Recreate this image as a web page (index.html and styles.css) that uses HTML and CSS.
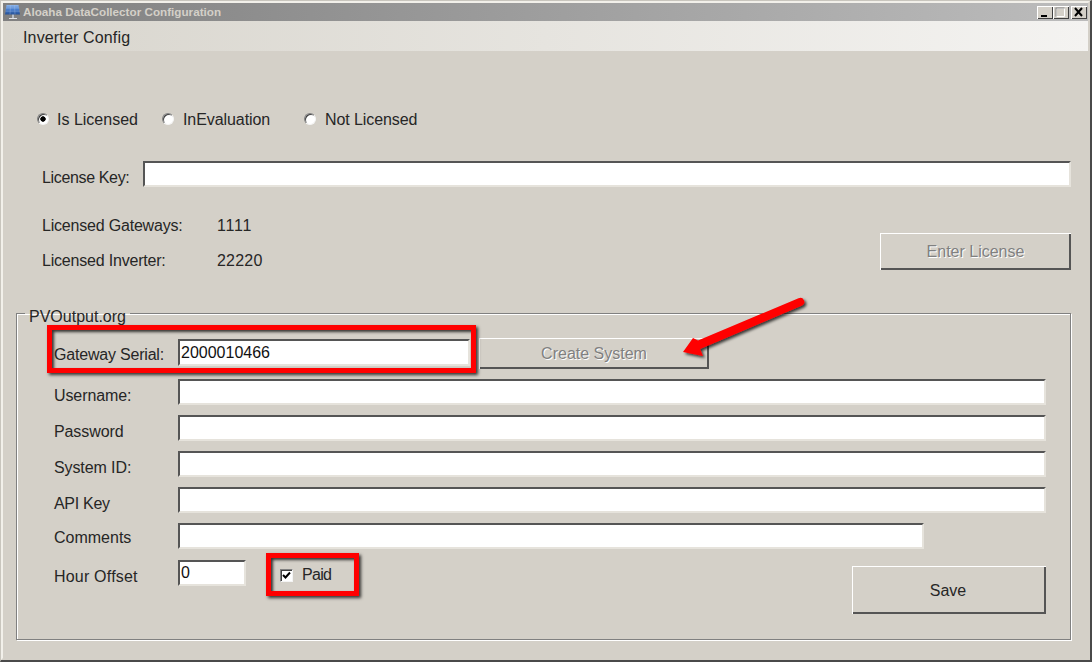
FILE: index.html
```html
<!DOCTYPE html>
<html lang="en">
<head>
<meta charset="utf-8">
<title>Aloaha DataCollector Configuration</title>
<link rel="stylesheet" href="styles.css">
</head>
<body>
<div class="window">
  <div class="frame">
    <div class="titlebar">
      <svg class="app-icon" width="16" height="16" viewBox="0 0 16 16">
        <defs>
          <linearGradient id="panel" x1="0" y1="0" x2="0" y2="1">
            <stop offset="0" stop-color="#8fb6ea"/>
            <stop offset=".45" stop-color="#4a80cf"/>
            <stop offset="1" stop-color="#245096"/>
          </linearGradient>
        </defs>
        <path d="M7 10h2v4H7z" fill="#b8bec6"/>
        <path d="M4 14h8v1H4z" fill="#e0e2e6"/>
        <path d="M1.500 1h12l1.500 9.500H0z" fill="url(#panel)"/>
        <path d="M5.500 1 5 10.500M9.500 1l.5 9.500M1 4h13.500M.5 7.200h14.500" stroke="#a9c4ea" stroke-opacity=".55" stroke-width=".6" fill="none"/>
      </svg>
      <span class="title-text">Aloaha DataCollector Configuration</span>
      <div class="caption-btns">
        <span class="cap-btn"><svg width="16" height="13" viewBox="0 0 16 13"><path d="M4 9h6v2H4z" fill="#000"/></svg></span>
        <span class="cap-btn"><svg width="16" height="13" viewBox="0 0 16 13"><path d="M3.500 2.500h8v8h-8z" fill="none" stroke="#fff" stroke-width="1"/><path d="M2.500 1.500h9v1h-9zM2.500 2.500h1v8h-1z" fill="#808080"/></svg></span>
        <span class="cap-btn cap-close"><svg width="16" height="13" viewBox="0 0 16 13"><path d="M4 2l7 8M11 2l-7 8" stroke="#000" stroke-width="2" fill="none"/></svg></span>
      </div>
    </div>
    <div class="menubar"><span class="menu-item">Inverter Config</span></div>

    <div class="content">
      <div class="radio-row">
        <label class="radio-item radio-first"><span class="radio radio-on"></span>Is Licensed</label>
        <label class="radio-item radio-second"><span class="radio radio-wide"></span>InEvaluation</label>
        <label class="radio-item radio-third"><span class="radio radio-wide"></span>Not Licensed</label>
      </div>

      <div class="license-row">
        <span class="license-label">License Key:</span>
        <input class="field field-grow" type="text" aria-label="License Key">
      </div>

      <div class="stats-row">
        <div class="stats">
          <div class="stat"><span class="stat-name">Licensed Gateways:</span><span class="stat-gateways">1111</span></div>
          <div class="stat"><span class="stat-name">Licensed Inverter:</span><span class="stat-inverter">22220</span></div>
        </div>
        <button class="btn btn-license" disabled>Enter License</button>
      </div>

      <fieldset class="group">
        <legend class="group-title">PVOutput.org</legend>
        <div class="row row-first">
          <span class="row-label label-gateway">Gateway Serial:</span>
          <input class="field field-serial" type="text" value="2000010466" aria-label="Gateway Serial">
          <button class="btn btn-create" disabled>Create System</button>
        </div>
        <div class="row">
          <span class="row-label">Username:</span>
          <input class="field field-grow" type="text" aria-label="Username">
        </div>
        <div class="row">
          <span class="row-label">Password</span>
          <input class="field field-grow" type="text" aria-label="Password">
        </div>
        <div class="row">
          <span class="row-label">System ID:</span>
          <input class="field field-grow" type="text" aria-label="System ID">
        </div>
        <div class="row">
          <span class="row-label label-api">API Key</span>
          <input class="field field-grow" type="text" aria-label="API Key">
        </div>
        <div class="row">
          <span class="row-label label-comments">Comments</span>
          <input class="field field-comments" type="text" aria-label="Comments">
        </div>
        <div class="row row-last">
          <span class="row-label label-hour">Hour Offset</span>
          <input class="field field-hour" type="text" value="0" aria-label="Hour Offset">
          <label class="check-item">
            <span class="check"><svg width="9" height="9" viewBox="0 0 9 9"><path d="M1 4l2.500 2.500L8 1.500" fill="none" stroke="#000" stroke-width="2"/></svg></span><span class="check-text">Paid</span>
          </label>
          <button class="btn btn-save">Save</button>
        </div>
      </fieldset>
    </div>
  </div>

  <div class="callout callout-serial"></div>
  <div class="callout callout-paid"></div>
  <svg class="arrow" width="140" height="72" viewBox="0 0 140 72">
    <defs>
      <filter id="arrow-shadow" x="-10%" y="-20%" width="125%" height="150%">
        <feDropShadow dx="2" dy="2" stdDeviation="1.500" flood-color="#000" flood-opacity=".75"/>
      </filter>
    </defs>
    <path d="M118.500 2.300A4 4 0 0 1 122 9.600L20 53L23 60L3 56L13 42L18 44.500Z" fill="#f00" filter="url(#arrow-shadow)"/>
  </svg>
</div>
</body>
</html>
```
FILE: styles.css
```css
* { box-sizing: border-box; }
html, body { margin: 0; height: 100%; overflow: hidden; }
body {
  font-family: "Liberation Sans", Arial, sans-serif;
  font-size: 16px;
  line-height: 20px;
  color: #262626;
  background: #d4d0c8;
}
.window {
  position: relative;
  width: 1092px;
  height: 662px;
  border-style: solid;
  border-width: 1px 2px 2px 1px;
  border-color: #c8c5bd #4a4a4a #4a4a4a #c8c5bd;
}
.frame {
  height: 100%;
  border-style: solid;
  border-width: 2px;
  border-color: #f2f0ea #d4d0c8 #d4d0c8 #f2f0ea;
  background: #d4d0c8;
}
.titlebar {
  display: flex;
  align-items: center;
  height: 18px;
  padding-left: 2px;
  background: linear-gradient(to right, #808080, #bcbcbc);
}
.app-icon { flex: none; }
.title-text {
  margin-left: 2px;
  font-size: 11.700px;
  font-weight: 700;
  line-height: 18px;
  color: #d4d0c8;
}
.caption-btns {
  display: flex;
  margin-left: auto;
  margin-right: 1px;
}
.cap-btn {
  display: block;
  width: 16px;
  height: 13px;
  background: #d4d0c8;
  box-shadow: inset 1px 1px 0 #fff, inset -1px -1px 0 #404040;
  line-height: 0;
}
.cap-close { margin-left: 2px; }
.menubar {
  height: 30px;
  padding-left: 20px;
  background: linear-gradient(to right, #d8d5cd, #f4f3f1);
}
.menu-item { display: block; line-height: 34px; letter-spacing: .15px; }
.content { padding: 58px 17px 0 13px; }

.radio-row { display: flex; height: 20px; padding-left: 21px; }
.radio-item { display: flex; align-items: center; padding-top: 2px; }
.radio-first { width: 125px; }
.radio-second { width: 142px; letter-spacing: -.08px; }
.radio-third { letter-spacing: -.08px; }
.radio {
  width: 12px;
  height: 12px;
  margin: 0 8px 2px 0;
  border-radius: 50%;
  border: 1px solid;
  border-color: #808080 #f4f4f4 #f4f4f4 #808080;
  background: #fff;
  box-shadow: inset 1px 1px 0 #404040;
}
.radio-wide { margin-right: 9px; }
.radio-on { background: radial-gradient(circle, #000 0 2.400px, #fff 3px); }

.license-row { display: flex; align-items: flex-start; height: 26px; margin-top: 32px; padding-left: 26px; }
.license-label { width: 101px; flex: none; padding-top: 7px; letter-spacing: -.35px; }

.field {
  display: block;
  height: 26px;
  padding: 0 1px;
  border: 2px solid;
  border-color: #555 #e6e3dc #e6e3dc #555;
  border-radius: 0;
  background: #fff;
  font: inherit;
  color: #111;
  outline: none;
}
.field-grow { flex: 1 1 auto; min-width: 0; }
.field-serial { width: 292px; height: 27px; margin-top: 1px; }
.field-comments { width: 746px; }
.field-hour { width: 68px; }

.stats-row { display: flex; justify-content: space-between; align-items: flex-start; margin-top: 29px; padding-left: 26px; }
.stats { display: flex; flex-direction: column; gap: 15px; }
.stat { display: flex; }
.stat-name { width: 175px; letter-spacing: -.2px; }
.stat-gateways { letter-spacing: .75px; }
.stat-inverter { letter-spacing: .2px; }

.btn {
  display: block;
  padding: 0;
  border: 0;
  border-radius: 0;
  background: #d4d0c8;
  font: inherit;
  color: #262626;
  box-shadow: inset 1px 1px 0 #fff, inset -2px -2px 0 #555;
}
.btn:disabled { color: #808080; text-shadow: 1px 1px 0 #fff; }
.btn-license { width: 191px; height: 37px; margin-top: 17px; }
.btn-create { width: 230px; height: 31px; margin-left: 9px; }
.btn-save { width: 194px; height: 48px; margin: 6px 0 0 auto; padding: 2px 2px 0 0; }

.group {
  min-width: 0;
  margin: 29px 0 0;
  padding: 12px 24px 25px 37px;
  border: 1px solid #808080;
  box-shadow: 1px 1px 0 #fff, inset 1px 1px 0 #fff;
}
.group-title { margin-left: -29px; padding: 8px 4px 0; line-height: 18px; }

.row { display: flex; align-items: flex-start; height: 26px; margin-bottom: 10px; }
.row-first { height: 31px; }
.row-last { height: auto; margin: 11px 0 0; }
.row-label { width: 124px; flex: none; padding-top: 7px; letter-spacing: -.1px; }
.label-gateway { padding-top: 7px; letter-spacing: -.2px; }
.label-comments { padding-top: 5px; letter-spacing: 0; }
.label-api { letter-spacing: -.3px; }
.label-hour { letter-spacing: .2px; }

.check-item { display: flex; align-items: center; margin: 5px 0 0 34px; }
.check {
  display: flex;
  align-items: center;
  justify-content: center;
  width: 13px;
  height: 13px;
  margin-right: 9px;
  border: 1px solid;
  border-color: #808080 #f4f4f4 #f4f4f4 #808080;
  background: #fff;
  box-shadow: inset 1px 1px 0 #404040;
}
.check-text { letter-spacing: -.7px; }

.callout {
  position: absolute;
  border: 5px solid #f00;
  box-shadow: 2px 2px 3px rgba(0, 0, 0, .75), inset 2px 2px 3px rgba(0, 0, 0, .75);
}
.callout-serial { left: 46px; top: 324px; width: 429px; height: 48px; }
.callout-paid { left: 265px; top: 552px; width: 93px; height: 43px; }
.arrow { position: absolute; left: 679px; top: 295px; }
```
